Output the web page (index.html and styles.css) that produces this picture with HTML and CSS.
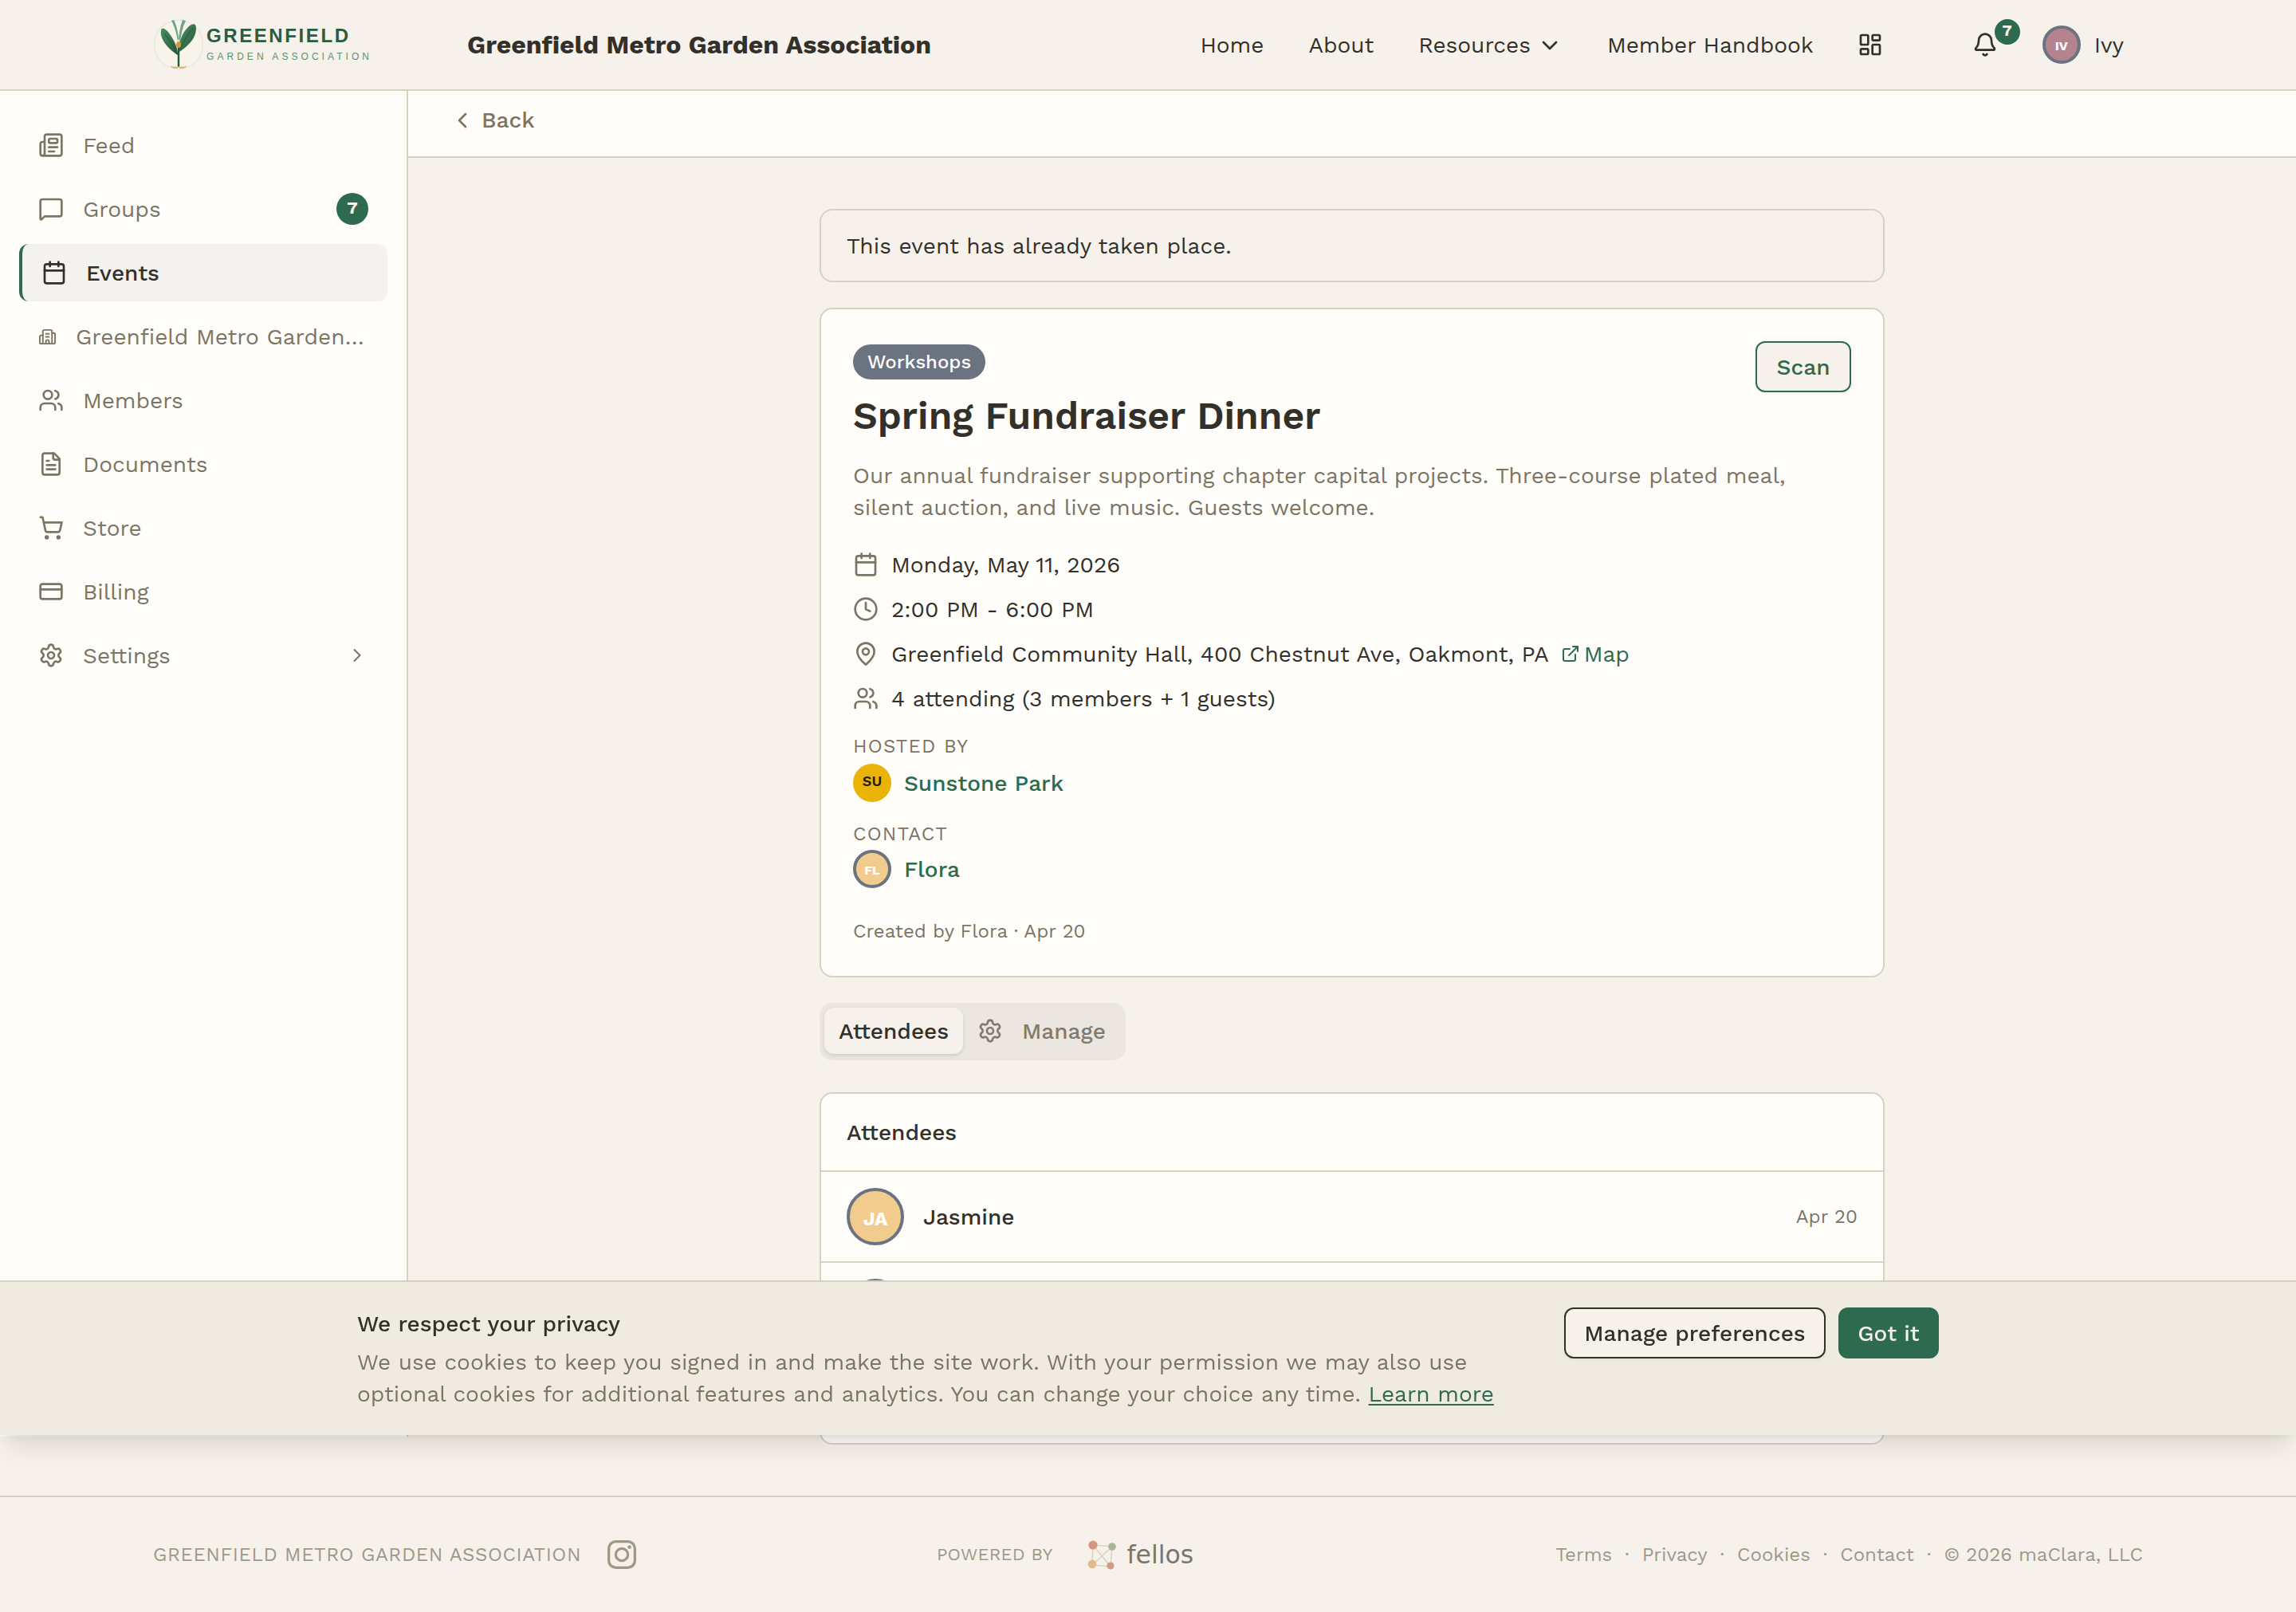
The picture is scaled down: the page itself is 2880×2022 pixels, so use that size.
FILE: index.html
```html
<!DOCTYPE html>
<html lang="en">
<head>
    <meta charset="UTF-8">
    <meta name="viewport" content="width=device-width, initial-scale=1.0">
    <title>Spring Fundraiser Dinner</title>
    <link rel="stylesheet" href="styles.css">
</head>
<body>

    <!-- Header -->
    <header class="header">
        <svg class="logo" width="280" height="64" viewBox="0 0 280 64">
            <defs>
                <linearGradient id="leaf" x1="0" y1="0" x2="1" y2="1">
                    <stop offset="0" stop-color="#4a8c62"/>
                    <stop offset="1" stop-color="#24583c"/>
                </linearGradient>
            </defs>
            <circle cx="32" cy="32" r="30.5" fill="#f8f4ec" stroke="#e6e3da" stroke-width="1"/>
            <path d="M31 29C30 19 27 9 23 2l3-1c4 8 6 18 6 28z" fill="#6fa583"/>
            <path d="M32 29c0-10 2-20 5-28l4 1c-4 8-6 17-7 27z" fill="#6fa583"/>
            <path d="M31 45C18 37 8 24 10 14c1-5 6-2 11 5 6 8 10 17 10 26z" fill="url(#leaf)"/>
            <path d="M33 41c-1-12 3-24 12-32 5-4 9-4 9 3 0 11-9 21-21 29z" fill="url(#leaf)"/>
            <path d="M14 18c7 8 12 16 17 26M50 11c-7 8-12 17-16 28" fill="none" stroke="#24583c" stroke-width="1"/>
            <path d="M32 34v26" stroke="#24583c" stroke-width="2.4"/>
            <ellipse cx="32" cy="32" rx="3" ry="4" fill="#c99a3f"/>
            <circle cx="32" cy="27" r="1.6" fill="#efe3c4"/>
            <path d="M22 59c4 3 7 1 10 1s6 2 10-1M25 61c3 1 5 0 7-1 2 1 4 2 7 1" fill="none" stroke="#d8b56c" stroke-width="1.4"/>
            <text class="logo-name" x="67" y="29" textLength="178">GREENFIELD</text>
            <text class="logo-sub" x="67" y="51" textLength="204">GARDEN ASSOCIATION</text>
        </svg>
        <div class="site-title">Greenfield Metro Garden Association</div>
        <nav class="nav">
            <a class="nav-link">Home</a>
            <a class="nav-link">About</a>
            <a class="nav-link">Resources
                <svg class="icon" width="32" height="32" viewBox="0 0 24 24"><path d="m6 9 6 6 6-6"/></svg>
            </a>
            <a class="nav-link">Member Handbook</a>
            <svg class="icon nav-grid" width="32" height="32" viewBox="0 0 24 24"><rect width="7" height="9" x="3" y="3" rx="1"/><rect width="7" height="5" x="14" y="3" rx="1"/><rect width="7" height="9" x="14" y="12" rx="1"/><rect width="7" height="5" x="3" y="16" rx="1"/></svg>
            <div class="bell">
                <svg class="icon" width="32" height="32" viewBox="0 0 24 24"><path d="M10.268 21a2 2 0 0 0 3.464 0"/><path d="M3.262 15.326A1 1 0 0 0 4 17h16a1 1 0 0 0 .74-1.673C19.41 13.956 18 12.499 18 8A6 6 0 0 0 6 8c0 4.499-1.411 5.956-2.738 7.326"/></svg>
                <span class="bell-badge">7</span>
            </div>
            <div class="user">
                <span class="avatar avatar-rose">IV</span>
                <span class="text">Ivy</span>
            </div>
        </nav>
    </header>

    <div class="shell">
        <!-- Sidebar -->
        <aside class="sidebar">
            <a class="side-item">
                <svg class="icon" width="32" height="32" viewBox="0 0 24 24"><path d="M15 18h-5"/><path d="M18 14h-8"/><path d="M4 22h16a2 2 0 0 0 2-2V4a2 2 0 0 0-2-2H8a2 2 0 0 0-2 2v16a2 2 0 0 1-4 0v-9a2 2 0 0 1 2-2h2"/><rect width="8" height="4" x="10" y="6" rx="1"/></svg>
                <span class="text">Feed</span>
            </a>
            <a class="side-item">
                <svg class="icon" width="32" height="32" viewBox="0 0 24 24"><path d="M22 17a2 2 0 0 1-2 2H6.828a2 2 0 0 0-1.414.586l-2.202 2.202A.71.71 0 0 1 2 21.286V5a2 2 0 0 1 2-2h16a2 2 0 0 1 2 2z"/></svg>
                <span class="text">Groups</span>
                <span class="count">7</span>
            </a>
            <a class="side-item active">
                <svg class="icon" width="32" height="32" viewBox="0 0 24 24"><path d="M8 2v4"/><path d="M16 2v4"/><rect width="18" height="18" x="3" y="4" rx="2"/><path d="M3 10h18"/></svg>
                <span class="text">Events</span>
            </a>
            <a class="side-item">
                <svg class="icon" width="23" height="23" viewBox="0 0 24 24"><path d="M10 12h4"/><path d="M10 8h4"/><path d="M14 21v-3a2 2 0 0 0-4 0v3"/><path d="M6 10H4a2 2 0 0 0-2 2v7a2 2 0 0 0 2 2h16a2 2 0 0 0 2-2V9a2 2 0 0 0-2-2h-2"/><path d="M6 21V5a2 2 0 0 1 2-2h8a2 2 0 0 1 2 2v16"/></svg>
                <span class="text">Greenfield Metro Garden…</span>
            </a>
            <a class="side-item">
                <svg class="icon" width="32" height="32" viewBox="0 0 24 24"><path d="M16 21v-2a4 4 0 0 0-4-4H6a4 4 0 0 0-4 4v2"/><path d="M16 3.128a4 4 0 0 1 0 7.744"/><path d="M22 21v-2a4 4 0 0 0-3-3.87"/><circle cx="9" cy="7" r="4"/></svg>
                <span class="text">Members</span>
            </a>
            <a class="side-item">
                <svg class="icon" width="32" height="32" viewBox="0 0 24 24"><path d="M15 2H6a2 2 0 0 0-2 2v16a2 2 0 0 0 2 2h12a2 2 0 0 0 2-2V7Z"/><path d="M14 2v4a2 2 0 0 0 2 2h4"/><path d="M10 9H8"/><path d="M16 13H8"/><path d="M16 17H8"/></svg>
                <span class="text">Documents</span>
            </a>
            <a class="side-item">
                <svg class="icon" width="32" height="32" viewBox="0 0 24 24"><circle cx="8" cy="21" r="1"/><circle cx="19" cy="21" r="1"/><path d="M2.05 2.05h2l2.66 12.42a2 2 0 0 0 2 1.58h9.78a2 2 0 0 0 1.95-1.57l1.65-7.43H5.12"/></svg>
                <span class="text">Store</span>
            </a>
            <a class="side-item">
                <svg class="icon" width="32" height="32" viewBox="0 0 24 24"><rect width="20" height="14" x="2" y="5" rx="2"/><path d="M2 10h20"/></svg>
                <span class="text">Billing</span>
            </a>
            <a class="side-item">
                <svg class="icon" width="32" height="32" viewBox="0 0 24 24"><path d="M9.671 4.136a2.34 2.34 0 0 1 4.659 0 2.34 2.34 0 0 0 3.319 1.915 2.34 2.34 0 0 1 2.33 4.033 2.34 2.34 0 0 0 0 3.831 2.34 2.34 0 0 1-2.33 4.033 2.34 2.34 0 0 0-3.319 1.915 2.34 2.34 0 0 1-4.659 0 2.34 2.34 0 0 0-3.32-1.915 2.34 2.34 0 0 1-2.33-4.033 2.34 2.34 0 0 0 0-3.831A2.34 2.34 0 0 1 6.35 6.051a2.34 2.34 0 0 0 3.319-1.915"/><circle cx="12" cy="12" r="3"/></svg>
                <span class="text">Settings</span>
                <svg class="icon chevron" width="28" height="28" viewBox="0 0 24 24"><path d="m9 18 6-6-6-6"/></svg>
            </a>
        </aside>

        <!-- Main -->
        <div class="main">
            <div class="back-bar">
                <svg class="icon" width="32" height="32" viewBox="0 0 24 24"><path d="m15 18-6-6 6-6"/></svg>
                <span>Back</span>
            </div>

            <div class="content">
                <div class="notice">This event has already taken place.</div>

                <section class="card event">
                    <div class="event-head">
                        <div>
                            <span class="pill">Workshops</span>
                            <h1>Spring Fundraiser Dinner</h1>
                        </div>
                        <button class="btn btn-scan">Scan</button>
                    </div>
                    <p class="desc">Our annual fundraiser supporting chapter capital projects. Three-course plated meal,<br>silent auction, and live music. Guests welcome.</p>

                    <div class="details">
                        <div class="detail">
                            <svg class="icon" width="32" height="32" viewBox="0 0 24 24"><path d="M8 2v4"/><path d="M16 2v4"/><rect width="18" height="18" x="3" y="4" rx="2"/><path d="M3 10h18"/></svg>
                            <span class="text">Monday, May 11, 2026</span>
                        </div>
                        <div class="detail">
                            <svg class="icon" width="32" height="32" viewBox="0 0 24 24"><circle cx="12" cy="12" r="10"/><path d="M12 6v6l4 2"/></svg>
                            <span class="text">2:00 PM - 6:00 PM</span>
                        </div>
                        <div class="detail">
                            <svg class="icon" width="32" height="32" viewBox="0 0 24 24"><path d="M20 10c0 4.993-5.539 10.193-7.399 11.799a1 1 0 0 1-1.202 0C9.539 20.193 4 14.993 4 10a8 8 0 0 1 16 0"/><circle cx="12" cy="10" r="3"/></svg>
                            <span class="text">Greenfield Community Hall, 400 Chestnut Ave, Oakmont, PA</span>
                            <a class="map">
                                <svg class="icon" width="24" height="24" viewBox="0 0 24 24"><path d="M15 3h6v6"/><path d="M10 14 21 3"/><path d="M18 13v6a2 2 0 0 1-2 2H5a2 2 0 0 1-2-2V8a2 2 0 0 1 2-2h6"/></svg>
                                <span class="text">Map</span>
                            </a>
                        </div>
                        <div class="detail">
                            <svg class="icon" width="32" height="32" viewBox="0 0 24 24"><path d="M16 21v-2a4 4 0 0 0-4-4H6a4 4 0 0 0-4 4v2"/><path d="M16 3.128a4 4 0 0 1 0 7.744"/><path d="M22 21v-2a4 4 0 0 0-3-3.87"/><circle cx="9" cy="7" r="4"/></svg>
                            <span class="text">4 attending (3 members + 1 guests)</span>
                        </div>
                    </div>

                    <div class="label">HOSTED BY</div>
                    <div class="person host">
                        <span class="avatar avatar-gold">SU</span>
                        <a class="text">Sunstone Park</a>
                    </div>
                    <div class="label">CONTACT</div>
                    <div class="person contact">
                        <span class="avatar avatar-sand">FL</span>
                        <a class="text">Flora</a>
                    </div>
                    <div class="created">Created by Flora · Apr 20</div>
                </section>

                <div class="tabs">
                    <div class="tab tab-active"><span class="text">Attendees</span></div>
                    <div class="tab tab-manage">
                        <svg class="icon" width="32" height="32" viewBox="0 0 24 24"><path d="M9.671 4.136a2.34 2.34 0 0 1 4.659 0 2.34 2.34 0 0 0 3.319 1.915 2.34 2.34 0 0 1 2.33 4.033 2.34 2.34 0 0 0 0 3.831 2.34 2.34 0 0 1-2.33 4.033 2.34 2.34 0 0 0-3.319 1.915 2.34 2.34 0 0 1-4.659 0 2.34 2.34 0 0 0-3.32-1.915 2.34 2.34 0 0 1-2.33-4.033 2.34 2.34 0 0 0 0-3.831A2.34 2.34 0 0 1 6.35 6.051a2.34 2.34 0 0 0 3.319-1.915"/><circle cx="12" cy="12" r="3"/></svg>
                        <span class="text">Manage</span>
                    </div>
                </div>

                <section class="card attendees">
                    <div class="attendees-title">Attendees</div>
                    <div class="attendee">
                        <span class="avatar avatar-lg avatar-sand">JA</span>
                        <span class="attendee-name text">Jasmine</span>
                        <span class="attendee-date">Apr 20</span>
                    </div>
                    <div class="attendee">
                        <span class="avatar avatar-lg avatar-sand"></span>
                    </div>
                    <div class="attendee"></div>
                </section>
            </div>
        </div>
    </div>

    <!-- Footer -->
    <footer class="footer">
        <div class="footer-left">
            <span class="footer-org">GREENFIELD METRO GARDEN ASSOCIATION</span>
            <svg width="36" height="36" viewBox="0 0 24 24" fill="#9f9889"><path d="M7 0h10a7 7 0 0 1 7 7v10a7 7 0 0 1-7 7H7a7 7 0 0 1-7-7V7a7 7 0 0 1 7-7zm0 2.2A4.8 4.8 0 0 0 2.2 7v10A4.8 4.8 0 0 0 7 21.8h10a4.8 4.8 0 0 0 4.8-4.8V7A4.8 4.8 0 0 0 17 2.2z" fill-rule="evenodd"/><circle cx="12" cy="12" r="5.1" fill="none" stroke="#9f9889" stroke-width="2.1"/><circle cx="18.4" cy="5.6" r="1.5"/></svg>
        </div>
        <div class="footer-mid">
            <span class="powered">POWERED BY</span>
            <svg class="fellos-mark" width="38" height="38" viewBox="0 0 38 38">
                <path d="M8 7l24 2-2 25-23-2zM8 7l22 27M32 9L7 32" fill="none" stroke="#d9d3c8" stroke-width="1.6"/>
                <circle cx="8" cy="7" r="5.6" fill="#d6937f"/>
                <circle cx="32" cy="9" r="4.8" fill="#a9b596"/>
                <circle cx="7" cy="31" r="5.4" fill="#e2bb8c"/>
                <circle cx="30" cy="33" r="4.6" fill="#cd9d86"/>
            </svg>
            <span class="fellos">fellos</span>
        </div>
        <div class="footer-links">
            <a>Terms</a><span>·</span><a>Privacy</a><span>·</span><a>Cookies</a><span>·</span><a>Contact</a><span>·</span><span>© 2026 maClara, LLC</span>
        </div>
    </footer>

    <!-- Cookie banner -->
    <div class="cookie">
        <div class="cookie-inner">
            <div class="cookie-text">
                <div class="cookie-title">We respect your privacy</div>
                <p>We use cookies to keep you signed in and make the site work. With your permission we may also use<br>optional cookies for additional features and analytics. You can change your choice any time. <a>Learn more</a></p>
            </div>
            <div class="cookie-actions">
                <button class="btn btn-prefs">Manage preferences</button>
                <button class="btn btn-ok">Got it</button>
            </div>
        </div>
    </div>

</body>
</html>
```
FILE: styles.css
```css
* {
    box-sizing: border-box;
}

body {
    margin: 0;
    height: 2022px;
    display: flex;
    flex-direction: column;
    background-color: #f6f1ea;
    color: #33302a;
    font-family: "Work Sans", Inter, sans-serif;
    font-size: 28px;
    line-height: 40px;
    overflow: hidden;
    white-space: nowrap;
}

p, h1 {
    margin: 0;
}

.icon {
    flex: none;
    display: block;
    fill: none;
    stroke: currentColor;
    stroke-width: 2;
    stroke-linecap: round;
    stroke-linejoin: round;
}

/* optical centering next to icons */
.text {
    padding-top: 2px;
}

/* Header */
.header {
    flex: none;
    height: 114px;
    display: flex;
    align-items: center;
    padding: 0 216px 0 192px;
    border-bottom: 2px solid #d8d1c0;
}

.logo-name {
    font: bold 24px "Liberation Sans", Arial, sans-serif;
    fill: #2a5c40;
}

.logo-sub {
    font: 12px "Liberation Sans", Arial, sans-serif;
    fill: #5c9272;
}

.site-title {
    margin-left: 114px;
    font-size: 32px;
    font-weight: 700;
}

.nav {
    margin-left: auto;
    display: flex;
    align-items: center;
}

.nav-link {
    margin-right: 56px;
    padding-top: 2px;
    display: flex;
    align-items: center;
    gap: 8px;
}

.nav-grid {
    margin-left: -1px;
    margin-right: 112px;
}

.bell {
    position: relative;
    margin-right: 56px;
}

.bell-badge {
    position: absolute;
    left: 28px;
    top: -16px;
    width: 32px;
    height: 32px;
    border-radius: 50%;
    background-color: #2d6a4f;
    color: #f6f1ea;
    font-size: 20px;
    font-weight: 700;
    line-height: 28px;
    text-align: center;
}

.user {
    display: flex;
    align-items: center;
    gap: 17px;
}

.avatar {
    flex: none;
    width: 48px;
    height: 48px;
    border-radius: 50%;
    border: 4px solid #6b7280;
    display: flex;
    align-items: center;
    justify-content: center;
    padding-top: 3px;
    font-size: 16px;
    font-weight: 700;
    color: #fff;
}

.avatar-rose {
    background-color: #b5838d;
}

.avatar-sand {
    background-color: #f2cc8f;
}

.avatar-gold {
    border: none;
    padding: 0 0 4px;
    background-color: #eab308;
    color: #1f1d18;
    font-size: 18px;
    font-weight: 600;
}

.avatar-lg {
    width: 72px;
    height: 72px;
    font-size: 24px;
    padding-top: 5px;
}

/* Sidebar */
.shell {
    flex: none;
    height: 1762px;
    display: flex;
    align-items: flex-start;
}

.sidebar {
    flex: none;
    width: 512px;
    height: 1688px;
    padding: 32px 24px;
    display: flex;
    flex-direction: column;
    gap: 8px;
    background-color: #fefdf9;
    border-right: 2px solid #d8d1c0;
}

.side-item {
    height: 72px;
    padding: 0 24px;
    display: flex;
    align-items: center;
    gap: 24px;
    color: #7c7464;
    border-radius: 12px;
}

.side-item.active {
    background-color: #f3f2ef;
    border-left: 4px solid #2d6a4f;
    color: #33302a;
    font-weight: 500;
}

.count {
    margin-left: auto;
    width: 40px;
    height: 40px;
    border-radius: 50%;
    background-color: #2d6a4f;
    color: #f6f1ea;
    font-size: 22px;
    font-weight: 700;
    line-height: 37px;
    text-align: center;
}

.chevron {
    margin-left: auto;
    stroke-width: 1.8;
}

/* Main column */
.main {
    flex: 1;
}

.back-bar {
    height: 84px;
    padding: 0 0 8px 52px;
    display: flex;
    align-items: center;
    gap: 8px;
    background-color: #fefdf9;
    border-bottom: 2px solid #d8d1c0;
    color: #7c7464;
    font-weight: 500;
}

.content {
    width: 1336px;
    margin: 64px auto 0;
}

.notice {
    height: 92px;
    padding: 25px 32px;
    border: 2px solid #d8d1c0;
    border-radius: 16px;
    margin-bottom: 32px;
}

.card {
    background-color: #fefdf9;
    border: 2px solid #d8d1c0;
    border-radius: 16px;
}

.event {
    height: 840px;
    padding: 40px;
}

.event-head {
    display: flex;
    justify-content: space-between;
    align-items: flex-start;
}

.pill {
    display: block;
    width: 166px;
    height: 44px;
    margin-top: 4px;
    border-radius: 22px;
    background-color: #6b7280;
    color: #fff;
    font-size: 24px;
    font-weight: 500;
    line-height: 44px;
    text-align: center;
}

h1 {
    margin-top: 14px;
    font-size: 48px;
    font-weight: 600;
    line-height: 64px;
}

.btn {
    height: 64px;
    padding: 2px 0 0;
    border-radius: 12px;
    border: 2px solid #33302a;
    background-color: #f6f1ea;
    color: #33302a;
    font: inherit;
    font-weight: 500;
    box-shadow: 0 2px 4px rgba(0, 0, 0, 0.05);
}

.btn-scan {
    width: 120px;
    border-color: #2d6a4f;
    color: #2d6a4f;
}

.desc {
    margin-top: 23px;
    color: #7c7464;
}

.details {
    margin: 31px 0 24px;
    display: flex;
    flex-direction: column;
    gap: 16px;
}

.detail {
    height: 40px;
    display: flex;
    align-items: center;
    gap: 16px;
}

.detail > .icon {
    color: #7c7464;
}

.map {
    margin-left: -1px;
    display: flex;
    align-items: center;
    gap: 5px;
    color: #2d6a4f;
}

.label {
    color: #7c7464;
    font-size: 24px;
    line-height: 32px;
    letter-spacing: 0.05em;
}

.person {
    display: flex;
    align-items: center;
    gap: 16px;
    color: #2d6a4f;
    font-weight: 500;
}

.host {
    margin: 6px 0 24px;
}

.contact {
    margin: 4px 0 38px;
}

.created {
    color: #7c7464;
    font-size: 24px;
    line-height: 32px;
}

/* Tabs */
.tabs {
    width: 384px;
    height: 72px;
    margin: 32px 0 40px;
    padding: 6px;
    display: flex;
    border-radius: 16px;
    background-color: #ebe7e0;
}

.tab {
    height: 58px;
    display: flex;
    align-items: center;
    font-weight: 500;
}

.tab-active {
    width: 174px;
    justify-content: center;
    border-radius: 12px;
    background-color: #f6f1ea;
    box-shadow: 0 2px 4px rgba(0, 0, 0, 0.12);
}

.tab-manage {
    padding-left: 18px;
    gap: 24px;
    color: #807b70;
}

/* Attendee list */
.attendees {
    height: 442px;
}

.attendees-title {
    height: 98px;
    padding: 29px 32px;
    border-bottom: 2px solid #d8d1c0;
    font-weight: 500;
}

.attendee {
    height: 114px;
    padding: 0 32px;
    display: flex;
    align-items: center;
    border-bottom: 2px solid #d8d1c0;
}

.attendee:last-child {
    border-bottom: none;
}

.attendee-name {
    margin-left: 24px;
    font-weight: 500;
}

.attendee-date {
    margin-left: auto;
    color: #7c7464;
    font-size: 24px;
}

/* Footer */
.footer {
    flex: none;
    height: 146px;
    padding: 0 192px;
    display: flex;
    align-items: center;
    border-top: 2px solid #d8d1c0;
    color: #9f9889;
    font-size: 24px;
}

.footer-left {
    width: 983px;
    display: flex;
    align-items: center;
    gap: 33px;
}

.footer-org {
    letter-spacing: 0.025em;
}

.footer-mid {
    display: flex;
    align-items: center;
}

.powered {
    font-size: 22px;
    letter-spacing: 0.2px;
}

.fellos-mark {
    margin: 0 12px 0 43px;
}

.fellos {
    font-family: "DejaVu Sans", sans-serif;
    font-size: 31.5px;
    color: #7a756d;
}

.footer-links {
    margin-left: auto;
    display: flex;
    gap: 16px;
}

/* Cookie banner */
.cookie {
    position: fixed;
    left: 0;
    right: 0;
    top: 1606px;
    height: 194px;
    background-color: #f0ebe0;
    border-top: 2px solid #d8d1c0;
    box-shadow: 0 20px 30px -6px rgba(0, 0, 0, 0.1), 0 8px 12px -8px rgba(0, 0, 0, 0.1);
}

.cookie-inner {
    width: 1984px;
    margin: 0 auto;
    padding-top: 32px;
    display: flex;
    justify-content: space-between;
    align-items: flex-start;
}

.cookie-text {
    padding-top: 1px;
}

.cookie-title {
    font-weight: 500;
    margin-bottom: 8px;
}

.cookie p {
    color: #7c7464;
}

.cookie a {
    color: #2d6a4f;
    text-decoration: underline;
    text-decoration-thickness: 2px;
    text-underline-offset: 3px;
}

.cookie-actions {
    display: flex;
    gap: 16px;
}

.btn-prefs {
    width: 328px;
}

.btn-ok {
    width: 126px;
    background-color: #2d6a4f;
    border-color: #2d6a4f;
    color: #f6f1ea;
    box-shadow: none;
}
```
